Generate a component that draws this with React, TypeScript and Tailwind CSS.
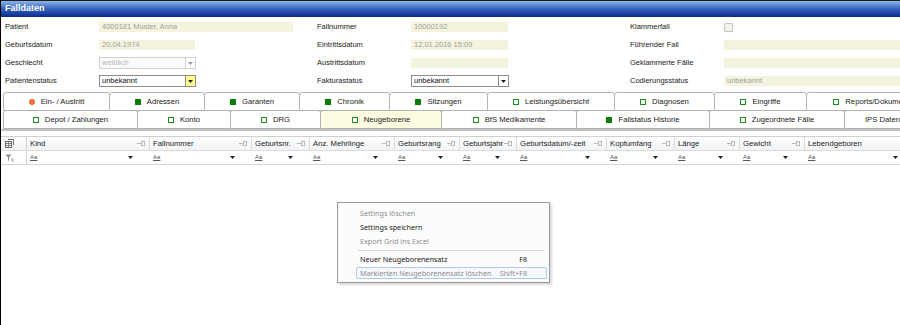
import React from "react";

type Tab = { label: string; icon: "dot" | "fill" | "hollow" | "none"; w: string; active?: boolean };

const row1: Tab[] = [
  { label: "Ein- / Austritt", icon: "dot", w: "w-[107px]" },
  { label: "Adressen", icon: "fill", w: "w-[96px]" },
  { label: "Garanten", icon: "fill", w: "w-[96px]" },
  { label: "Chronik", icon: "fill", w: "w-[91px]" },
  { label: "Sitzungen", icon: "fill", w: "w-[99px]" },
  { label: "Leistungsübersicht", icon: "hollow", w: "w-[128px]" },
  { label: "Diagnosen", icon: "hollow", w: "w-[101px]" },
  { label: "Eingriffe", icon: "hollow", w: "w-[93px]" },
  { label: "Reports/Dokumente", icon: "hollow", w: "w-[135px]" },
];

const row2: Tab[] = [
  { label: "Depot / Zahlungen", icon: "hollow", w: "w-[135px]" },
  { label: "Konto", icon: "hollow", w: "w-[94px]" },
  { label: "DRG", icon: "hollow", w: "w-[91px]" },
  { label: "Neugeborene", icon: "hollow", w: "w-[122px]", active: true },
  { label: "BfS Medikamente", icon: "hollow", w: "w-[136px]" },
  { label: "Fallstatus Historie", icon: "fill", w: "w-[134px]" },
  { label: "Zugeordnete Fälle", icon: "hollow", w: "w-[136px]" },
  { label: "IPS Daten", icon: "none", w: "w-[77px]" },
];

const columns = [
  { label: "Kind", w: "w-[123px]" },
  { label: "Fallnummer", w: "w-[102px]" },
  { label: "Geburtsnr.", w: "w-[58px]" },
  { label: "Anz. Mehrlinge", w: "w-[85px]" },
  { label: "Geburtsrang", w: "w-[65px]" },
  { label: "Geburtsjahr", w: "w-[57px]" },
  { label: "Geburtsdatum/-zeit", w: "w-[90px]" },
  { label: "Kopfumfang", w: "w-[68px]" },
  { label: "Länge", w: "w-[65px]" },
  { label: "Gewicht", w: "w-[65px]" },
  { label: "Lebendgeboren", w: "w-[110px]" },
];

function Arrow({ color = "#222" }: { color?: string }) {
  return (
    <svg width="5" height="3" viewBox="0 0 5 3">
      <path d="M0 0 L5 0 L2.5 3 Z" fill={color} />
    </svg>
  );
}

function TabIcon({ kind }: { kind: Tab["icon"] }) {
  if (kind === "dot") return <span className="w-[6px] h-[6px] rounded-full bg-[#f26b3a]" />;
  if (kind === "fill") return <span className="w-[6px] h-[6px] bg-[#0b7d0b]" />;
  if (kind === "hollow") return <span className="w-[6px] h-[6px] border-[1.5px] border-[#1d8a1d] bg-white" />;
  return null;
}

function TabRow({ tabs }: { tabs: Tab[] }) {
  return (
    <div className="flex h-[19px]">
      {tabs.map((t) => (
        <div
          key={t.label}
          className={`${t.w} shrink-0 h-full flex items-center justify-center gap-[6px] border border-[#b4b4b4] -ml-px first:ml-0 rounded-t-[3px] text-[7.7px] text-[#222] whitespace-nowrap ${
            t.active ? "bg-[#fdfbe0]" : "bg-white"
          }`}
        >
          <TabIcon kind={t.icon} />
          <span>{t.label}</span>
        </div>
      ))}
    </div>
  );
}

function ReadOnly({ value = "", w }: { value?: string; w: string }) {
  return <div className={`${w} h-[10px] bg-[#f4f3de] text-[#a0a0a0] pl-[3px] leading-[10px]`}>{value}</div>;
}

function Select({ value, w, variant }: { value: string; w: string; variant: "disabled" | "yellow" | "plain" }) {
  const border = variant === "disabled" ? "border-[#d0d0d0]" : "border-[#8c8c8c]";
  const btn = variant === "yellow" ? "bg-[#ffff8c]" : "bg-white";
  return (
    <div className={`${w} h-[12px] flex border ${border} ${variant === "disabled" ? "bg-[#fafafa] text-[#b8b8b8]" : "bg-white text-[#111]"}`}>
      <div className="flex-1 pl-[2px] leading-[10px]">{value}</div>
      <div className={`w-[10px] flex items-center justify-center border-l ${border} ${btn}`}>
        <Arrow color={variant === "disabled" ? "#9a9a9a" : "#222"} />
      </div>
    </div>
  );
}

function Pin() {
  return (
    <svg width="8" height="5" viewBox="0 0 8 5" className="shrink-0">
      <path d="M0 2.5 H4" stroke="#b8b8b8" strokeWidth="1" />
      <rect x="4.5" y="0.5" width="3" height="4" fill="none" stroke="#b8b8b8" strokeWidth="1" />
    </svg>
  );
}

export default function App() {
  return (
    <div className="w-[900px] h-[325px] overflow-hidden relative bg-white border-l border-black font-['Liberation_Sans',Arial,sans-serif]">
      <header className="h-[17px] border-t border-[#1b1b1b] bg-linear-to-b from-[#8ab6ea] via-[#3560bb] to-[#0b2a8e] text-white font-bold text-[9px] leading-[15px] pl-[4px]">
        Falldaten
      </header>

      <div className="grid grid-cols-[312px_313px_1fr] pl-[4px] pt-px text-[7.5px] text-[#1a1a1a]">
        <div className="flex flex-col">
          <div className="h-[18px] flex items-center">
            <span className="w-[94px]">Patient</span>
            <ReadOnly value="4000181 Muster,  Anna" w="w-[194px]" />
          </div>
          <div className="h-[18px] flex items-center">
            <span className="w-[94px]">Geburtsdatum</span>
            <ReadOnly value="20.04.1974" w="w-[96px]" />
          </div>
          <div className="h-[18px] flex items-center">
            <span className="w-[94px]">Geschlecht</span>
            <Select value="weiblich" w="w-[97px]" variant="disabled" />
          </div>
          <div className="h-[18px] flex items-center">
            <span className="w-[94px]">Patientenstatus</span>
            <Select value="unbekannt" w="w-[97px]" variant="yellow" />
          </div>
        </div>
        <div className="flex flex-col">
          <div className="h-[18px] flex items-center">
            <span className="w-[94px]">Fallnummer</span>
            <ReadOnly value="10000192" w="w-[97px]" />
          </div>
          <div className="h-[18px] flex items-center">
            <span className="w-[94px]">Eintrittsdatum</span>
            <ReadOnly value="12.01.2016 15:09" w="w-[97px]" />
          </div>
          <div className="h-[18px] flex items-center">
            <span className="w-[94px]">Austrittsdatum</span>
            <ReadOnly w="w-[97px]" />
          </div>
          <div className="h-[18px] flex items-center">
            <span className="w-[94px]">Fakturastatus</span>
            <Select value="unbekannt" w="w-[98px]" variant="plain" />
          </div>
        </div>
        <div className="flex flex-col">
          <div className="h-[18px] flex items-center">
            <span className="w-[94px]">Klammerfall</span>
            <span className="w-[9px] h-[9px] border border-[#c4c4c4] bg-[#f3f3ea] rounded-[1px]" />
          </div>
          <div className="h-[18px] flex items-center">
            <span className="w-[94px]">Führender Fall</span>
            <ReadOnly w="flex-1" />
          </div>
          <div className="h-[18px] flex items-center">
            <span className="w-[94px]">Geklammerte Fälle</span>
            <ReadOnly w="flex-1" />
          </div>
          <div className="h-[18px] flex items-center">
            <span className="w-[94px]">Codierungsstatus</span>
            <ReadOnly value="unbekannt" w="flex-1" />
          </div>
        </div>
      </div>

      <div className="mt-[2px] pl-[2px]">
        <TabRow tabs={row1} />
        <div className="-mt-px">
          <TabRow tabs={row2} />
        </div>
      </div>
      <div className="h-[2px] bg-[#c2c2c2]" />

      <div className="mt-[5px] border-t border-[#cfcfcf] text-[7.7px]">
        <div className="flex h-[14px] border-b border-[#dcdcdc] bg-linear-to-b from-white to-[#f1f3f6]">
          <div className="w-[26px] shrink-0 flex items-center pl-[4px] border-r border-[#d6d6d6]">
            <svg width="9" height="9" viewBox="0 0 9 9">
              <rect x="0.5" y="2.5" width="6" height="6" fill="#fff" stroke="#6b6b6b" />
              <path d="M0.5 4.5 H6.5 M0.5 6.5 H6.5 M3.5 2.5 V8.5" stroke="#6b6b6b" strokeWidth="0.8" />
              <path d="M3 0.5 H8.5 V6" fill="none" stroke="#6b6b6b" />
            </svg>
          </div>
          {columns.map((c) => (
            <div key={c.label} className={`${c.w} shrink-0 flex items-center justify-between pl-[3px] pr-[4px] border-r border-[#dadada] text-[#1a1a1a]`}>
              <span>{c.label}</span>
              <Pin />
            </div>
          ))}
        </div>
        <div className="flex h-[14px] border-b border-[#d6d6d6]">
          <div className="w-[26px] shrink-0 flex items-center pl-[4px] border-r border-[#d6d6d6]">
            <svg width="9" height="8" viewBox="0 0 9 8">
              <path d="M0.5 0.5 H6.5 L4 3.5 V7 L3 6.3 V3.5 Z" fill="#8a8a8a" />
              <path d="M6 5 H9 M6 7 H9" stroke="#8a8a8a" strokeWidth="0.8" />
            </svg>
          </div>
          {columns.map((c) => (
            <div key={c.label} className={`${c.w} shrink-0 flex items-center justify-between pl-[3px] pr-[17px]`}>
              <span className="text-[6px] underline text-[#555]">Aa</span>
              <Arrow />
            </div>
          ))}
        </div>
      </div>

      <div className="absolute left-[336px] top-[202px] w-[213px] h-[81px] bg-[#fcfcfc] border border-[#9a9a9a] shadow-[2px_2px_2px_rgba(0,0,0,0.15)] pt-[3px] pl-[18px] pr-[2px] font-['Noto_Sans',sans-serif] text-[7.2px]">
        <div className="h-[14px] flex items-center pl-[4px] text-[#8c8c8c]">Settings löschen</div>
        <div className="h-[14px] flex items-center pl-[4px] text-[#1a1a1a]">Settings speichern</div>
        <div className="h-[14px] flex items-center pl-[4px] text-[#8c8c8c]">Export Grid ins Excel</div>
        <div className="h-[4px] flex items-center px-[2px]">
          <div className="h-px w-full bg-[#d8d8d8]" />
        </div>
        <div className="h-[14px] flex items-center justify-between pl-[4px] pr-[20px] text-[#1a1a1a]">
          <span>Neuer Neugeborenensatz</span>
          <span>F8</span>
        </div>
        <div className="h-[12px] mt-px flex items-center justify-between pl-[3px] pr-[19px] text-[#8c8c8c] border border-[#aecbef] bg-[#f6f9fe] rounded-[2px]">
          <span>Markierten Neugeborenensatz löschen</span>
          <span>Shift+F8</span>
        </div>
      </div>
    </div>
  );
}
